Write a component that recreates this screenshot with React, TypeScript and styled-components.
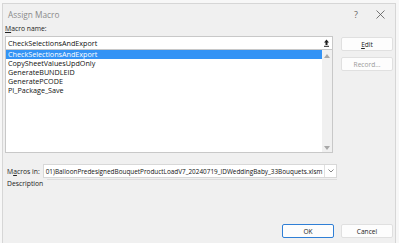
import styled, { createGlobalStyle } from "styled-components";

const GlobalStyle = createGlobalStyle`
    html, body {
        margin: 0;
        padding: 0;
        background: #f7f7f7;
        font-family: "Open Sans", "Noto Sans", sans-serif;
    }
`;

const macros = [
    "CheckSelectionsAndExport",
    "CopySheetValuesUpdOnly",
    "GenerateBUNDLEID",
    "GeneratePCODE",
    "PI_Package_Save",
];

export default function App() {
    return (
        <Page>
            <GlobalStyle />
            <Dialog>
                <TitleBar>
                    <Title>Assign Macro</Title>
                    <TitleButtons>
                        <TitleGlyph>?</TitleGlyph>
                        <TitleGlyph>
                            <svg width="9" height="9" viewBox="0 0 9 9">
                                <path d="M0.5 0.5 L8.5 8.5 M8.5 0.5 L0.5 8.5" stroke="#555" strokeWidth="0.8" />
                            </svg>
                        </TitleGlyph>
                    </TitleButtons>
                </TitleBar>

                <Body>
                    <Main>
                        <Label>
                            <u>M</u>acro name:
                        </Label>
                        <NameInput>
                            <span>CheckSelectionsAndExport</span>
                            <UploadIcon width="7" height="8" viewBox="0 0 7 8">
                                <path d="M3.5 0.5 L6 3.5 H4.5 V6 H2.5 V3.5 H1 Z" fill="#222" />
                                <rect x="1" y="6.8" width="5" height="1" fill="#222" />
                            </UploadIcon>
                        </NameInput>
                        <ListBox>
                            <ListItems>
                                {macros.map((m, i) => (
                                    <ListItem key={m} $selected={i === 0}>
                                        {m}
                                    </ListItem>
                                ))}
                            </ListItems>
                            <ScrollBar>
                                <ScrollArrow width="6" height="4" viewBox="0 0 6 4">
                                    <path d="M0 4 L3 0 L6 4 Z" fill="#a8a8a8" />
                                </ScrollArrow>
                                <ScrollArrow width="6" height="4" viewBox="0 0 6 4">
                                    <path d="M0 0 L3 4 L6 0 Z" fill="#a8a8a8" />
                                </ScrollArrow>
                            </ScrollBar>
                        </ListBox>
                    </Main>

                    <SideButtons>
                        <Button>
                            <u>E</u>dit
                        </Button>
                        <Button $disabled>Record...</Button>
                    </SideButtons>
                </Body>

                <MacrosInRow>
                    <Label>
                        M<u>a</u>cros in:
                    </Label>
                    <Select>
                        <SelectText>01)BalloonPredesignedBouquetProductLoadV7_20240719_IDWeddingBaby_33Bouquets.xlsm</SelectText>
                        <SelectArrow>
                            <svg width="6" height="4" viewBox="0 0 6 4">
                                <path d="M0.5 0.5 L3 3 L5.5 0.5" stroke="#666" strokeWidth="0.8" fill="none" />
                            </svg>
                        </SelectArrow>
                    </Select>
                </MacrosInRow>

                <DescriptionRow>
                    <Label>Description</Label>
                    <Rule />
                </DescriptionRow>

                <Footer>
                    <Button $primary>OK</Button>
                    <Button>Cancel</Button>
                </Footer>
            </Dialog>
        </Page>
    );
}

const Page = styled.div`
    width: 399px;
    height: 243px;
    padding: 3px 3px 0 2px;
    box-sizing: border-box;
    overflow: hidden;
`;

const Dialog = styled.div`
    height: 240px;
    background: #f0f0f0;
    border: 1px solid #d6d6d6;
    border-bottom: none;
    box-sizing: border-box;
    display: flex;
    flex-direction: column;
`;

const TitleBar = styled.div`
    display: flex;
    align-items: center;
    justify-content: space-between;
    height: 20px;
    padding: 0 10px 0 5px;
`;

const Title = styled.span`
    font-size: 8.3px;
    color: #8a8a8a;
`;

const TitleButtons = styled.div`
    display: flex;
    align-items: center;
    gap: 18px;
`;

const TitleGlyph = styled.span`
    font-size: 9px;
    color: #666;
    display: flex;
    align-items: center;
`;

const Body = styled.div`
    display: flex;
    gap: 8px;
    padding: 0 2px;
`;

const Main = styled.div`
    width: 330px;
    display: flex;
    flex-direction: column;
`;

const Label = styled.span`
    font-size: 6.8px;
    color: #222;
    white-space: nowrap;
`;

const NameInput = styled.div`
    margin-top: 3px;
    height: 12px;
    background: #fff;
    border: 1px solid #c8c8c8;
    border-bottom: none;
    display: flex;
    align-items: center;
    justify-content: space-between;
    padding: 0 2px;
    font-size: 7.2px;
    color: #111;
`;

const UploadIcon = styled.svg`
    display: block;
`;

const ListBox = styled.div`
    height: 102px;
    background: #fff;
    border: 1px solid #c8c8c8;
    display: flex;
`;

const ListItems = styled.div`
    flex: 1;
    display: flex;
    flex-direction: column;
`;

const ListItem = styled.div<{ $selected?: boolean }>`
    height: 9px;
    line-height: 9px;
    padding-left: 2px;
    font-size: 7.2px;
    color: ${(p) => (p.$selected ? "#fff" : "#111")};
    background: ${(p) => (p.$selected ? "#3393f5" : "transparent")};
`;

const ScrollBar = styled.div`
    width: 10px;
    background: #f0f0f0;
    display: flex;
    flex-direction: column;
    justify-content: space-between;
    align-items: center;
    padding: 4px 0 2px;
`;

const ScrollArrow = styled.svg`
    display: block;
`;

const SideButtons = styled.div`
    display: flex;
    flex-direction: column;
    gap: 6px;
    padding-top: 13px;
    width: 52px;
`;

const Button = styled.button<{ $primary?: boolean; $disabled?: boolean }>`
    height: 14px;
    width: 52px;
    padding: 0;
    background: #fdfdfd;
    border: 1px solid ${(p) => (p.$primary ? "#2f7fd6" : "#e0e0e0")};
    border-radius: 2px;
    font-family: inherit;
    font-size: 6.6px;
    color: ${(p) => (p.$disabled ? "#9a9a9a" : "#222")};
`;

const MacrosInRow = styled.div`
    display: flex;
    align-items: center;
    gap: 3px;
    margin-top: 11px;
    padding: 0 0 0 4px;
    width: 330px;
`;

const Select = styled.div`
    flex: 1;
    height: 14px;
    background: #fff;
    border: 1px solid #d8d8d8;
    box-sizing: border-box;
    display: flex;
    align-items: center;
    justify-content: space-between;
    padding-left: 2px;
    overflow: hidden;
`;

const SelectText = styled.span`
    font-size: 6.4px;
    color: #111;
    white-space: nowrap;
`;

const SelectArrow = styled.span`
    flex: none;
    width: 11px;
    height: 100%;
    border-left: 1px solid #e0e0e0;
    display: flex;
    align-items: center;
    justify-content: center;
`;

const DescriptionRow = styled.div`
    display: flex;
    align-items: flex-start;
    gap: 4px;
    padding: 1px 0 0 4px;
    width: 330px;
`;

const Rule = styled.div`
    flex: 1;
    height: 1px;
    background: #dcdcdc;
`;

const Footer = styled.div`
    margin-top: auto;
    display: flex;
    justify-content: flex-end;
    gap: 7px;
    padding: 0 2px 5px 0;
`;
